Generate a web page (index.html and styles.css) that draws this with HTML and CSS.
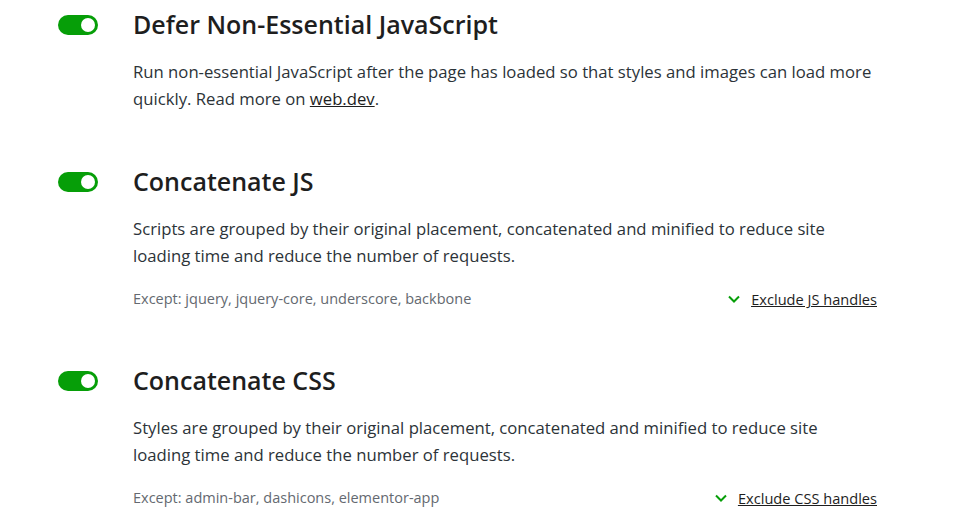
FILE: index.html
```html
<!DOCTYPE html>
<html lang="en">
<head>
    <meta charset="UTF-8">
    <meta name="viewport" content="width=device-width, initial-scale=1.0">
    <title>Boost Settings</title>
    <link rel="stylesheet" href="styles.css">
</head>
<body>
    <div class="modules">
        <div class="module">
            <span class="toggle on"><span class="knob"></span></span>
            <div class="module-body">
                <h3 class="module-title">Defer Non-Essential JavaScript</h3>
                <p class="module-desc">Run non-essential JavaScript after the page has loaded so that styles and images can load more quickly. Read more on <a href="#">web.dev</a>.</p>
            </div>
        </div>

        <div class="module">
            <span class="toggle on"><span class="knob"></span></span>
            <div class="module-body">
                <h3 class="module-title">Concatenate JS</h3>
                <p class="module-desc">Scripts are grouped by their original placement, concatenated and minified to reduce site loading time and reduce the number of requests.</p>
                <div class="module-footer">
                    <span class="except">Except: jquery, jquery-core, underscore, backbone</span>
                    <a href="#" class="exclude-link">
                        <svg class="chevron" width="14" height="14" viewBox="0 0 14 14"><polyline points="2,4.5 7,9.5 12,4.5" fill="none" stroke="#069e08" stroke-width="2"/></svg>
                        <span>Exclude JS handles</span>
                    </a>
                </div>
            </div>
        </div>

        <div class="module">
            <span class="toggle on"><span class="knob"></span></span>
            <div class="module-body">
                <h3 class="module-title">Concatenate CSS</h3>
                <p class="module-desc">Styles are grouped by their original placement, concatenated and minified to reduce site loading time and reduce the number of requests.</p>
                <div class="module-footer">
                    <span class="except">Except: admin-bar, dashicons, elementor-app</span>
                    <a href="#" class="exclude-link">
                        <svg class="chevron" width="14" height="14" viewBox="0 0 14 14"><polyline points="2,4.5 7,9.5 12,4.5" fill="none" stroke="#069e08" stroke-width="2"/></svg>
                        <span>Exclude CSS handles</span>
                    </a>
                </div>
            </div>
        </div>
    </div>
</body>
</html>
```

FILE: styles.css
```css
body {
    margin: 0;
    font-family: 'Open Sans', 'Noto Sans', sans-serif;
    color: #2c3338;
    background: #fff;
}
.modules {
    padding: 9px 0 0 58px;
    width: 819px;
}
.module {
    display: flex;
    gap: 35px;
    margin-bottom: 54px;
}
.toggle {
    flex: none;
    width: 40px;
    height: 20px;
    margin-top: 6px;
    border-radius: 10px;
    background: #c3c4c7;
    position: relative;
    box-sizing: border-box;
}
.toggle.on {
    background: #069e08;
}
.knob {
    position: absolute;
    top: 3px;
    right: 3px;
    width: 14px;
    height: 14px;
    border-radius: 50%;
    background: #fff;
}
.module-body {
    flex: 1;
}
.module-title {
    margin: 0;
    font-size: 25px;
    line-height: 31px;
    font-weight: 600;
    color: #1e1e1e;
}
.module-desc {
    margin: 18px 0 0;
    font-size: 16.7px;
    line-height: 27px;
    color: #2c3338;
}
.module-desc a {
    color: #1e1e1e;
}
.module-footer {
    display: flex;
    justify-content: space-between;
    align-items: center;
    margin-top: 18px;
    line-height: 24px;
}
.except {
    font-size: 14.5px;
    color: #646970;
}
.exclude-link {
    display: flex;
    align-items: center;
    gap: 10px;
    font-size: 14.6px;
    color: #1e1e1e;
}
.exclude-link span {
    text-decoration: underline;
}
```
